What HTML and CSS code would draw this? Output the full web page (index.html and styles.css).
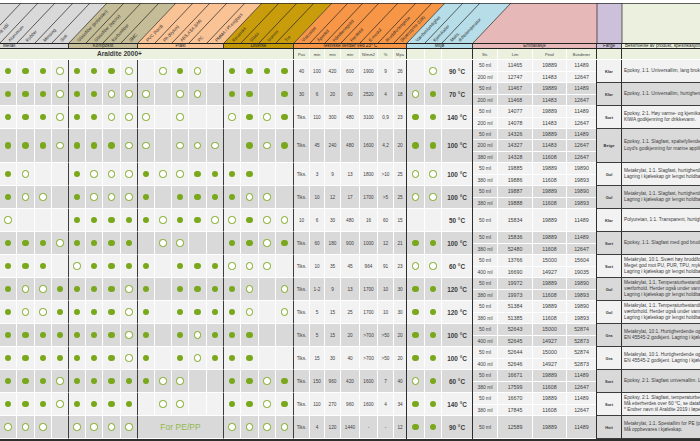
FILE: index.html
```html
<!DOCTYPE html>
<html lang="no">
<head>
<meta charset="utf-8">
<title>Araldite 2000+</title>
<link rel="stylesheet" href="styles.css">
</head>
<body>
<div class="sheet">
<svg class="diag" width="700" height="43" viewBox="0 0 700 43">
<polygon points="-60,43 69,43 107,3 -60,3" fill="#d9d9d9"/>
<polygon points="69,43 138,43 176,3 107,3" fill="#c4bd97"/>
<polygon points="138,43 224,43 262,3 176,3" fill="#fac396"/>
<polygon points="224,43 294,43 332,3 262,3" fill="#c99c0c"/>
<polygon points="294,43 407,43 445,3 332,3" fill="#f79646"/>
<polygon points="407,43 473,43 511,3 445,3" fill="#b7dde8"/>
<polygon points="473,43 597,43 597,3 511,3" fill="#e6b9b8"/>
<rect x="597" y="3" width="25" height="40" fill="#ccc0da"/>
<rect x="622" y="3" width="78" height="40" fill="#ebf1de"/>
<path d="M-17 43l38-40M0 43l38-40M17 43l38-40M35 43l38-40M52 43l38-40M69 43l38-40M86 43l38-40M103 43l38-40M121 43l38-40M138 43l38-40M155 43l38-40M172 43l38-40M189 43l38-40M207 43l38-40M224 43l38-40M241 43l38-40M259 43l38-40M276 43l38-40M294 43l38-40M310 43l38-40M325 43l38-40M341 43l38-40M360 43l38-40M378 43l38-40M394 43l38-40M407 43l38-40M425 43l38-40M442 43l38-40M473 43l38-40M597 3V43M622 3V43M0 3.5H700" stroke="#222" stroke-width="0.7" fill="none"/>
<g class="lbl">
<text transform="translate(-7 42) rotate(-46.5)">Rustfritt stål</text>
<text transform="translate(10 42) rotate(-46.5)">Aluminium</text>
<text transform="translate(27.5 42) rotate(-46.5)">Kobber</text>
<text transform="translate(45 42) rotate(-46.5)">Messing</text>
<text transform="translate(62 42) rotate(-46.5)">Sink</text>
<text transform="translate(79 42) rotate(-46.5)">Glassfiber (polyester)</text>
<text transform="translate(96 42) rotate(-46.5)">Glassfiber (epoxy)</text>
<text transform="translate(113.5 42) rotate(-46.5)">Karbonfiber</text>
<text transform="translate(131 42) rotate(-46.5)">SMC</text>
<text transform="translate(148 42) rotate(-46.5)">PVC (hard)</text>
<text transform="translate(165 42) rotate(-46.5)">PA (Nylon)</text>
<text transform="translate(182 42) rotate(-46.5)">ABS,ASA,SAN</text>
<text transform="translate(199.5 42) rotate(-46.5)">PC</text>
<text transform="translate(217 42) rotate(-46.5)">PMMA / Pl.exiglass</text>
<text transform="translate(234 42) rotate(-46.5)">Keramikk</text>
<text transform="translate(251.5 42) rotate(-46.5)">Glass</text>
<text transform="translate(269 42) rotate(-46.5)">Gummi</text>
<text transform="translate(286.5 42) rotate(-46.5)">Tre</text>
<text transform="translate(303.5 42) rotate(-46.5)">Viskositet</text>
<text transform="translate(319 42) rotate(-46.5)">Åpentid</text>
<text transform="translate(334.5 42) rotate(-46.5)">Håndteringstid</text>
<text transform="translate(352 42) rotate(-46.5)">Herdetid</text>
<text transform="translate(370.5 42) rotate(-46.5)">E-modul</text>
<text transform="translate(387.5 42) rotate(-46.5)">Bruddforlengelse</text>
<text transform="translate(402 42) rotate(-46.5)">Skjærstyrke (GB)</text>
<text transform="translate(417.5 42) rotate(-46.5)">Værbestandighet</text>
<text transform="translate(435 42) rotate(-46.5)">Kjemikalier</text>
<text transform="translate(452 42) rotate(-46.5)">Maks.</text>
<text transform="translate(460 42) rotate(-46.5)">driftstemperatur</text>
</g>
</svg>

<div class="band">
<div class="w-met left">Metall</div>
<div class="w-kom">Kompositt</div>
<div class="w-pla">Plast</div>
<div class="w-div">Diverse</div>
<div class="w-tek">Tekniske verdier ved 23° C</div>
<div class="w-mil">Miljø</div>
<div class="w-emb">Emballasje</div>
<div class="w-far">Farge</div>
<div class="w-des left">Beskrivelse av produkt, spesifikasjoner</div>
</div>

<div class="units">
<div class="name">Araldite 2000+</div>
<div class="tk"><span>Pas</span><span>min</span><span>min</span><span>min</span><span>N/mm2</span><span>%</span><span>Mpa</span></div>
<div class="ml"><span></span><span></span><span></span></div>
<div class="em"><div class="sub"><span>Str.</span><span>Lim</span><span>Pinol</span><span>Bundener</span></div></div>
<div class="fa"></div>
<div class="de"></div>
</div>

<div class="rows">

<div class="prod">
<div class="dots"><i class="f"></i><i class="f"></i><i class="f"></i><i class="o e"></i><i class="f"></i><i class="f"></i><i class="f"></i><i class="o e"></i><i></i><i class="o"></i><i class="f"></i><i class="o"></i><i class="e"></i><i class="f"></i><i class="f"></i><i class="f"></i><i class="f e"></i></div>
<div class="tk"><span>40</span><span>100</span><span>420</span><span>600</span><span>1900</span><span>9</span><span>26</span></div>
<div class="ml"><i></i><i class="o"></i><b>90 °C</b></div>
<div class="em"><div class="sub"><span>50 ml</span><span>11465</span><span>19889</span><span>11489</span></div><div class="sub"><span>200 ml</span><span>12747</span><span>11483</span><span>12647</span></div></div>
<div class="fa">Klar</div>
<div class="de"><p>Epoksy, 1:1. Universallim, lang brukstid.</p></div>
</div>

<div class="prod">
<div class="dots"><i class="f"></i><i class="f"></i><i class="f"></i><i class="o e"></i><i class="f"></i><i class="f"></i><i class="o"></i><i class="o e"></i><i class="o"></i><i></i><i class="o"></i><i class="o"></i><i class="e"></i><i class="f"></i><i class="f"></i><i></i><i class="f e"></i></div>
<div class="tk"><span>30</span><span>6</span><span>20</span><span>60</span><span>2520</span><span>4</span><span>18</span></div>
<div class="ml"><i class="o"></i><i class="f"></i><b>70 °C</b></div>
<div class="em"><div class="sub"><span>50 ml</span><span>11467</span><span>19889</span><span>11489</span></div><div class="sub"><span>200 ml</span><span>11468</span><span>11483</span><span>12647</span></div></div>
<div class="fa">Klar</div>
<div class="de"><p>Epoksy, 1:1. Universallim, hurtigherdende.</p></div>
</div>

<div class="prod">
<div class="dots"><i class="f"></i><i class="f"></i><i class="f"></i><i class="o e"></i><i class="f"></i><i class="f"></i><i class="o"></i><i class="o e"></i><i class="o"></i><i></i><i class="o"></i><i></i><i class="e"></i><i class="o"></i><i class="f"></i><i class="o"></i><i class="f e"></i></div>
<div class="tk"><span>Tiks.</span><span>110</span><span>300</span><span>480</span><span>3100</span><span>0,9</span><span>23</span></div>
<div class="ml"><i class="f"></i><i class="f"></i><b>140 °C</b></div>
<div class="em"><div class="sub"><span>50 ml</span><span>14077</span><span>19889</span><span>11489</span></div><div class="sub"><span>200 ml</span><span>14078</span><span>11483</span><span>12647</span></div></div>
<div class="fa">Sort</div>
<div class="de"><p>Epoksy, 2:1. Høy varme- og kjemikaliebestandighet.</p><p>KIWA godkjenning for drikkevann.</p></div>
</div>

<div class="prod t3">
<div class="dots"><i class="f"></i><i class="f"></i><i class="f"></i><i class="o e"></i><i class="f"></i><i class="f"></i><i class="f"></i><i class="o e"></i><i class="o"></i><i></i><i class="o"></i><i class="o"></i><i class="o e"></i><i></i><i class="f"></i><i class="o"></i><i class="f e"></i></div>
<div class="tk"><span>Tiks.</span><span>45</span><span>240</span><span>480</span><span>1600</span><span>4,2</span><span>20</span></div>
<div class="ml"><i class="f"></i><i class="f"></i><b>100 °C</b></div>
<div class="em"><div class="sub"><span>50 ml</span><span>14326</span><span>19889</span><span>11489</span></div><div class="sub"><span>200 ml</span><span>14327</span><span>11483</span><span>12647</span></div><div class="sub"><span>380 ml</span><span>14328</span><span>11608</span><span>12647</span></div></div>
<div class="fa">Beige</div>
<div class="de"><p>Epoksy, 1:1. Slagfast, spaltefyllende, tiksotrop.</p><p>Loyd's godkjenning for marine applikasjoner.</p></div>
</div>

<div class="prod">
<div class="dots"><i class="f"></i><i class="o"></i><i></i><i class="e"></i><i class="f"></i><i class="o"></i><i class="o"></i><i class="o e"></i><i class="f"></i><i class="o"></i><i class="o"></i><i class="f"></i><i class="f e"></i><i class="f"></i><i class="f"></i><i></i><i class="e"></i></div>
<div class="tk"><span>Tiks.</span><span>3</span><span>9</span><span>13</span><span>1800</span><span>&gt;10</span><span>25</span></div>
<div class="ml"><i class="o"></i><i class="o"></i><b>100 °C</b></div>
<div class="em"><div class="sub"><span>50 ml</span><span>19885</span><span>19889</span><span>19890</span></div><div class="sub"><span>380 ml</span><span>19886</span><span>11608</span><span>19893</span></div></div>
<div class="fa">Gul</div>
<div class="de"><p>Metakrylat, 1:1. Slagfast, hurtigherdende.</p><p>Lagring i kjøleskap gir lengst holdbarhet.</p></div>
</div>

<div class="prod">
<div class="dots"><i class="f"></i><i class="o"></i><i class="o"></i><i class="e"></i><i class="f"></i><i class="o"></i><i class="o"></i><i class="o e"></i><i class="f"></i><i></i><i class="f"></i><i class="f"></i><i class="f e"></i><i class="f"></i><i class="o"></i><i class="o"></i><i class="e"></i></div>
<div class="tk"><span>Tiks.</span><span>10</span><span>12</span><span>17</span><span>1700</span><span>&gt;5</span><span>25</span></div>
<div class="ml"><i class="o"></i><i class="o"></i><b>100 °C</b></div>
<div class="em"><div class="sub"><span>50 ml</span><span>19887</span><span>19889</span><span>19890</span></div><div class="sub"><span>380 ml</span><span>19888</span><span>11608</span><span>19893</span></div></div>
<div class="fa">Gul</div>
<div class="de"><p>Metakrylat, 1:1. Slagfast, hurtigherdende.</p><p>Lagring i kjøleskap gir lengst holdbarhet.</p></div>
</div>

<div class="prod">
<div class="dots"><i class="o"></i><i></i><i></i><i class="e"></i><i class="f"></i><i class="f"></i><i class="f"></i><i class="f e"></i><i class="f"></i><i class="o"></i><i class="f"></i><i class="f"></i><i class="o e"></i><i class="o"></i><i class="f"></i><i class="o"></i><i class="o e"></i></div>
<div class="tk"><span>10</span><span>6</span><span>30</span><span>480</span><span>16</span><span>60</span><span>15</span></div>
<div class="ml"><i></i><i></i><b>50 °C</b></div>
<div class="em"><div class="sub"><span>50 ml</span><span>15834</span><span>19889</span><span>11489</span></div></div>
<div class="fa">Klar</div>
<div class="de"><p>Polyuretan, 1:1. Transparent, hurtigherdende.</p></div>
</div>

<div class="prod">
<div class="dots"><i class="f"></i><i class="f"></i><i class="f"></i><i class="o e"></i><i class="f"></i><i class="f"></i><i class="f"></i><i class="f e"></i><i></i><i class="o"></i><i class="o"></i><i></i><i class="e"></i><i class="f"></i><i class="f"></i><i class="o"></i><i class="f e"></i></div>
<div class="tk"><span>Tiks.</span><span>60</span><span>180</span><span>900</span><span>1000</span><span>12</span><span>21</span></div>
<div class="ml"><i class="f"></i><i class="f"></i><b>100 °C</b></div>
<div class="em"><div class="sub"><span>50 ml</span><span>15836</span><span>19889</span><span>11489</span></div><div class="sub"><span>380 ml</span><span>52480</span><span>11608</span><span>12647</span></div></div>
<div class="fa">Sort</div>
<div class="de"><p>Epoksy, 1:1. Slagfast med god bruddforlengelse.</p></div>
</div>

<div class="prod">
<div class="dots"><i class="f"></i><i class="f"></i><i class="f"></i><i class="e"></i><i class="o"></i><i class="f"></i><i class="f"></i><i class="f e"></i><i class="f"></i><i></i><i class="f"></i><i class="f"></i><i class="f e"></i><i class="o"></i><i class="o"></i><i class="o"></i><i class="e"></i></div>
<div class="tk"><span>Tiks.</span><span>10</span><span>35</span><span>45</span><span>964</span><span>91</span><span>23</span></div>
<div class="ml"><i class="o"></i><i class="o"></i><b>60 °C</b></div>
<div class="em"><div class="sub"><span>50 ml</span><span>13766</span><span>15000</span><span>15604</span></div><div class="sub"><span>400 ml</span><span>16690</span><span>14927</span><span>19035</span></div></div>
<div class="fa">Sort</div>
<div class="de"><p>Metakrylat, 10:1. Svært høy bruddforlengelse.</p><p>Meget god mot PU, PUR, TPU, mykPVC.</p><p>Lagring i kjøleskap gir lengst holdbarhet.</p></div>
</div>

<div class="prod">
<div class="dots"><i class="f"></i><i class="o"></i><i class="o"></i><i class="f e"></i><i class="f"></i><i class="f"></i><i class="f"></i><i class="o e"></i><i class="f"></i><i></i><i class="f"></i><i class="f"></i><i class="f e"></i><i class="f"></i><i class="o"></i><i></i><i class="o e"></i></div>
<div class="tk"><span>Tiks.</span><span>1-2</span><span>9</span><span>13</span><span>1700</span><span>10</span><span>30</span></div>
<div class="ml"><i class="f"></i><i class="f"></i><b>120 °C</b></div>
<div class="em"><div class="sub"><span>50 ml</span><span>19972</span><span>19889</span><span>19890</span></div><div class="sub"><span>380 ml</span><span>19973</span><span>11608</span><span>19893</span></div></div>
<div class="fa">Gul</div>
<div class="de"><p>Metakrylat, 1:1. Temperaturbestandig, tåler</p><p>værforhold. Herder også under vann.</p><p>Lagring i kjøleskap gir lengst holdbarhet.</p></div>
</div>

<div class="prod">
<div class="dots"><i class="f"></i><i class="o"></i><i class="o"></i><i class="f e"></i><i class="f"></i><i class="f"></i><i class="f"></i><i class="o e"></i><i class="f"></i><i></i><i class="f"></i><i class="f"></i><i class="f e"></i><i class="f"></i><i class="o"></i><i></i><i class="o e"></i></div>
<div class="tk"><span>Tiks.</span><span>5</span><span>15</span><span>25</span><span>1700</span><span>10</span><span>30</span></div>
<div class="ml"><i class="f"></i><i class="f"></i><b>120 °C</b></div>
<div class="em"><div class="sub"><span>50 ml</span><span>51384</span><span>19889</span><span>19890</span></div><div class="sub"><span>380 ml</span><span>51385</span><span>11608</span><span>19893</span></div></div>
<div class="fa">Gul</div>
<div class="de"><p>Metakrylat, 1:1. Temperaturbestandig, tåler</p><p>værforhold. Herder også under vann.</p><p>Lagring i kjøleskap gir lengst holdbarhet.</p></div>
</div>

<div class="prod">
<div class="dots"><i class="f"></i><i class="f"></i><i class="f"></i><i class="f e"></i><i class="f"></i><i class="f"></i><i class="f"></i><i class="o e"></i><i class="f"></i><i></i><i class="f"></i><i class="o"></i><i class="f e"></i><i class="f"></i><i class="f"></i><i></i><i class="e"></i></div>
<div class="tk"><span>Tiks.</span><span>5</span><span>15</span><span>20</span><span>&gt;700</span><span>&gt;50</span><span>20</span></div>
<div class="ml"><i class="f"></i><i class="f"></i><b>100 °C</b></div>
<div class="em"><div class="sub"><span>50 ml</span><span>52643</span><span>15000</span><span>52874</span></div><div class="sub"><span>400 ml</span><span>52645</span><span>14927</span><span>52873</span></div></div>
<div class="fa">Grå</div>
<div class="de"><p>Metakrylat, 10:1. Hurtigherdende og slagfast.</p><p>EN 45545-2 godkjent. Lagring i kjøleskap.</p></div>
</div>

<div class="prod">
<div class="dots"><i class="f"></i><i class="f"></i><i class="f"></i><i class="f e"></i><i class="f"></i><i class="f"></i><i class="f"></i><i class="o e"></i><i class="f"></i><i></i><i class="f"></i><i class="o"></i><i class="f e"></i><i class="f"></i><i class="f"></i><i></i><i class="e"></i></div>
<div class="tk"><span>Tiks.</span><span>15</span><span>30</span><span>40</span><span>&gt;700</span><span>&gt;50</span><span>20</span></div>
<div class="ml"><i class="f"></i><i class="f"></i><b>100 °C</b></div>
<div class="em"><div class="sub"><span>50 ml</span><span>52644</span><span>15000</span><span>52874</span></div><div class="sub"><span>400 ml</span><span>52646</span><span>14927</span><span>52873</span></div></div>
<div class="fa">Grå</div>
<div class="de"><p>Metakrylat, 10:1. Hurtigherdende og slagfast.</p><p>EN 45545-2 godkjent. Lagring i kjøleskap.</p></div>
</div>

<div class="prod">
<div class="dots"><i class="f"></i><i class="f"></i><i class="f"></i><i class="o e"></i><i class="f"></i><i class="f"></i><i class="f"></i><i class="f e"></i><i class="f"></i><i class="o"></i><i class="o"></i><i></i><i class="e"></i><i class="f"></i><i class="f"></i><i class="o"></i><i class="f e"></i></div>
<div class="tk"><span>Tiks.</span><span>150</span><span>960</span><span>420</span><span>1600</span><span>7</span><span>40</span></div>
<div class="ml"><i class="o"></i><i class="f"></i><b>60 °C</b></div>
<div class="em"><div class="sub"><span>50 ml</span><span>16671</span><span>19889</span><span>11489</span></div><div class="sub"><span>380 ml</span><span>17599</span><span>11608</span><span>12647</span></div></div>
<div class="fa">Sort</div>
<div class="de"><p>Epoksy, 2:1. Slagfast universallim. Lang brukstid.</p></div>
</div>

<div class="prod">
<div class="dots"><i class="f"></i><i class="f"></i><i class="f"></i><i class="o e"></i><i class="f"></i><i class="f"></i><i class="f"></i><i class="f e"></i><i></i><i class="o"></i><i class="o"></i><i></i><i class="e"></i><i class="f"></i><i class="f"></i><i class="o"></i><i class="f e"></i></div>
<div class="tk"><span>Tiks.</span><span>110</span><span>270</span><span>960</span><span>1600</span><span>4</span><span>34</span></div>
<div class="ml"><i class="f"></i><i class="f"></i><b>140 °C</b></div>
<div class="em"><div class="sub"><span>50 ml</span><span>16670</span><span>19889</span><span>11489</span></div><div class="sub"><span>380 ml</span><span>17845</span><span>11608</span><span>12647</span></div></div>
<div class="fa">Sort</div>
<div class="de"><p>Epoksy, 2:1. Slagfast, temperaturbestandig.</p><p>Må etterherdes over 60 °C,  se datablad.</p><p>* Endrer navn til Araldite 2019 i løpet av 2020.</p></div>
</div>

<div class="prod">
<div class="dots"><i class="o"></i><i class="o"></i><i class="o"></i><i class="e"></i><i class="o"></i><i class="o"></i><i class="o"></i><i class="o e"></i><em class="pe e">For PE/PP</em><i class="o"></i><i class="o"></i><i class="o"></i><i class="o e"></i></div>
<div class="tk"><span>Tiks.</span><span>4</span><span>120</span><span>1440</span><span>-</span><span>-</span><span>12</span></div>
<div class="ml"><i class="f"></i><i class="f"></i><b>90 °C</b></div>
<div class="em"><div class="sub"><span>50 ml</span><span>12589</span><span>19889</span><span>11489</span></div></div>
<div class="fa">Hvit</div>
<div class="de"><p>Metakrylat, 1:1. Spesiallim for PE (polyetylen).</p><p>Må oppbevares i kjøleskap.</p></div>
</div>

</div>
</div>
</body>
</html>
```

FILE: styles.css
```css
* { box-sizing: border-box; margin: 0; padding: 0; }

html, body { background: #ffffff; }

body {
  margin: 0;
  width: 700px;
  height: 441px;
  overflow: hidden;
  font-family: "Liberation Sans", Arial, sans-serif;
  color: #3a3a3a;
}

.sheet { width: 700px; }

/* diagonal header */
.diag { display: block; width: 700px; height: 43px; }
.lbl text {
  font-family: "Liberation Sans", Arial, sans-serif;
  font-size: 4.4px;
  fill: #2a2a2a;
}

/* section band */
.band {
  display: flex;
  height: 6px;
  border-top: 1px solid #222;
  border-bottom: 1px solid #222;
  font-size: 4.6px;
  line-height: 4px;
  color: #262626;
}
.band > div {
  border-right: 1px solid #333;
  text-align: center;
  white-space: nowrap;
  overflow: hidden;
}
.band > .left { text-align: left; padding-left: 3px; }
.w-met { width: 69px; background: #d9d9d9; }
.w-kom { width: 69px; background: #c4bd97; }
.w-pla { width: 86px; background: #fac396; }
.w-div { width: 70px; background: #c29808; }
.w-tek { width: 113px; background: #f79646; }
.w-mil { width: 66px; background: #b7dde8; }
.w-emb { width: 124px; background: #e6b9b8; }
.w-far { width: 25px; background: #ccc0da; }
.w-des { width: 78px; background: #ebf1de; border-right: none !important; }

/* units row */
.units {
  display: flex;
  height: 11px;
  background: #ebf1de;
  font-size: 4px;
  color: #404040;
  border-bottom: 1px solid #ffffff;
}
.units .name {
  width: 294px;
  padding-left: 97px;
  font-weight: bold;
  font-size: 6.6px;
  line-height: 10px;
  border-right: 1px solid #444;
  color: #3a3a3a;
}
.units span { display: flex; align-items: center; justify-content: center; }

/* column groups */
.tk { display: flex; width: 113px; border-right: 1px solid #2e2e2e; }
.tk > * { border-right: 1px solid #ffffff; }
.tk > :nth-child(1) { width: 16px; }
.tk > :nth-child(2) { width: 15px; }
.tk > :nth-child(3) { width: 16px; }
.tk > :nth-child(4) { width: 19px; }
.tk > :nth-child(5) { width: 18px; }
.tk > :nth-child(6) { width: 16px; }
.tk > :nth-child(7) { flex: 1; border-right: none; }

.ml { display: flex; width: 66px; border-right: 1px solid #2e2e2e; }
.ml > * { border-right: 1px solid #ffffff; }
.ml > :nth-child(1) { width: 18px; }
.ml > :nth-child(2) { width: 17px; }
.ml > :nth-child(3) { flex: 1; border-right: none; }

.em { display: flex; flex-direction: column; width: 124px; border-right: 1px solid #2e2e2e; }
.sub { display: flex; flex: 1; }
.sub > * { border-right: 1px solid #ffffff; display: flex; align-items: center; justify-content: center; white-space: nowrap; }
.sub > :nth-child(1) { width: 25px; }
.sub > :nth-child(2) { width: 35px; }
.sub > :nth-child(3) { width: 34px; }
.sub > :nth-child(4) { flex: 1; border-right: none; }

.fa {
  width: 25px;
  border-right: 1px solid #2e2e2e;
  display: flex;
  align-items: center;
  justify-content: center;
  font-size: 4px;
  font-weight: bold;
  color: #333;
}
.de {
  width: 78px;
  display: flex;
  flex-direction: column;
  justify-content: center;
  padding-left: 2px;
  white-space: nowrap;
  overflow: hidden;
  font-size: 4.8px;
  line-height: 6.3px;
  color: #3c3c3c;
}

/* body rows */
.rows { border-bottom: 2px solid #2e2e2e; }
.prod { display: flex; height: 23px; background: #f2f2f2; }
.prod:nth-child(even) { background: #d9d9d9; }
.prod.t3 { height: 34px; }

.dots {
  display: grid;
  width: 294px;
  grid-template-columns: 17px 18px 17px 17px 17px 17px 18px 17px 17px 17px 17px 18px 17px 17px 18px 17px 18px;
}
.dots > * {
  display: flex;
  align-items: center;
  justify-content: center;
  border-right: 1px solid #ffffff;
  border-bottom: 1px solid #ffffff;
}
.dots > .e { border-right: 1px solid #3c3c3c; }
.dots > .pe {
  grid-column: span 5;
  font-style: normal;
  font-size: 8.4px;
  color: #93b84a;
  letter-spacing: 0.1px;
}

.prod .tk > *, .prod .ml > * {
  display: flex;
  align-items: center;
  justify-content: center;
  border-bottom: 1px solid #ffffff;
}
.prod .tk { font-size: 4.7px; color: #404040; }
.prod .sub { border-bottom: 1px solid #ffffff; font-size: 5px; color: #404040; }
.prod .sub > :nth-child(2),
.prod .sub > :nth-child(3),
.prod .sub > :nth-child(4) { font-size: 5.3px; }
.prod .fa, .prod .de { border-bottom: 1px solid #3c3c3c; }
.prod .ml b { font-size: 6.4px; font-weight: bold; color: #3a3a3a; }

i.f::after {
  content: "";
  width: 6.8px;
  height: 6.8px;
  border-radius: 50%;
  background: #7aa81c;
}
i.o::after {
  content: "";
  width: 7.2px;
  height: 7.2px;
  border-radius: 50%;
  border: 1.9px solid #7aa81c;
  background: #ffffff;
  box-sizing: border-box;
}
```
